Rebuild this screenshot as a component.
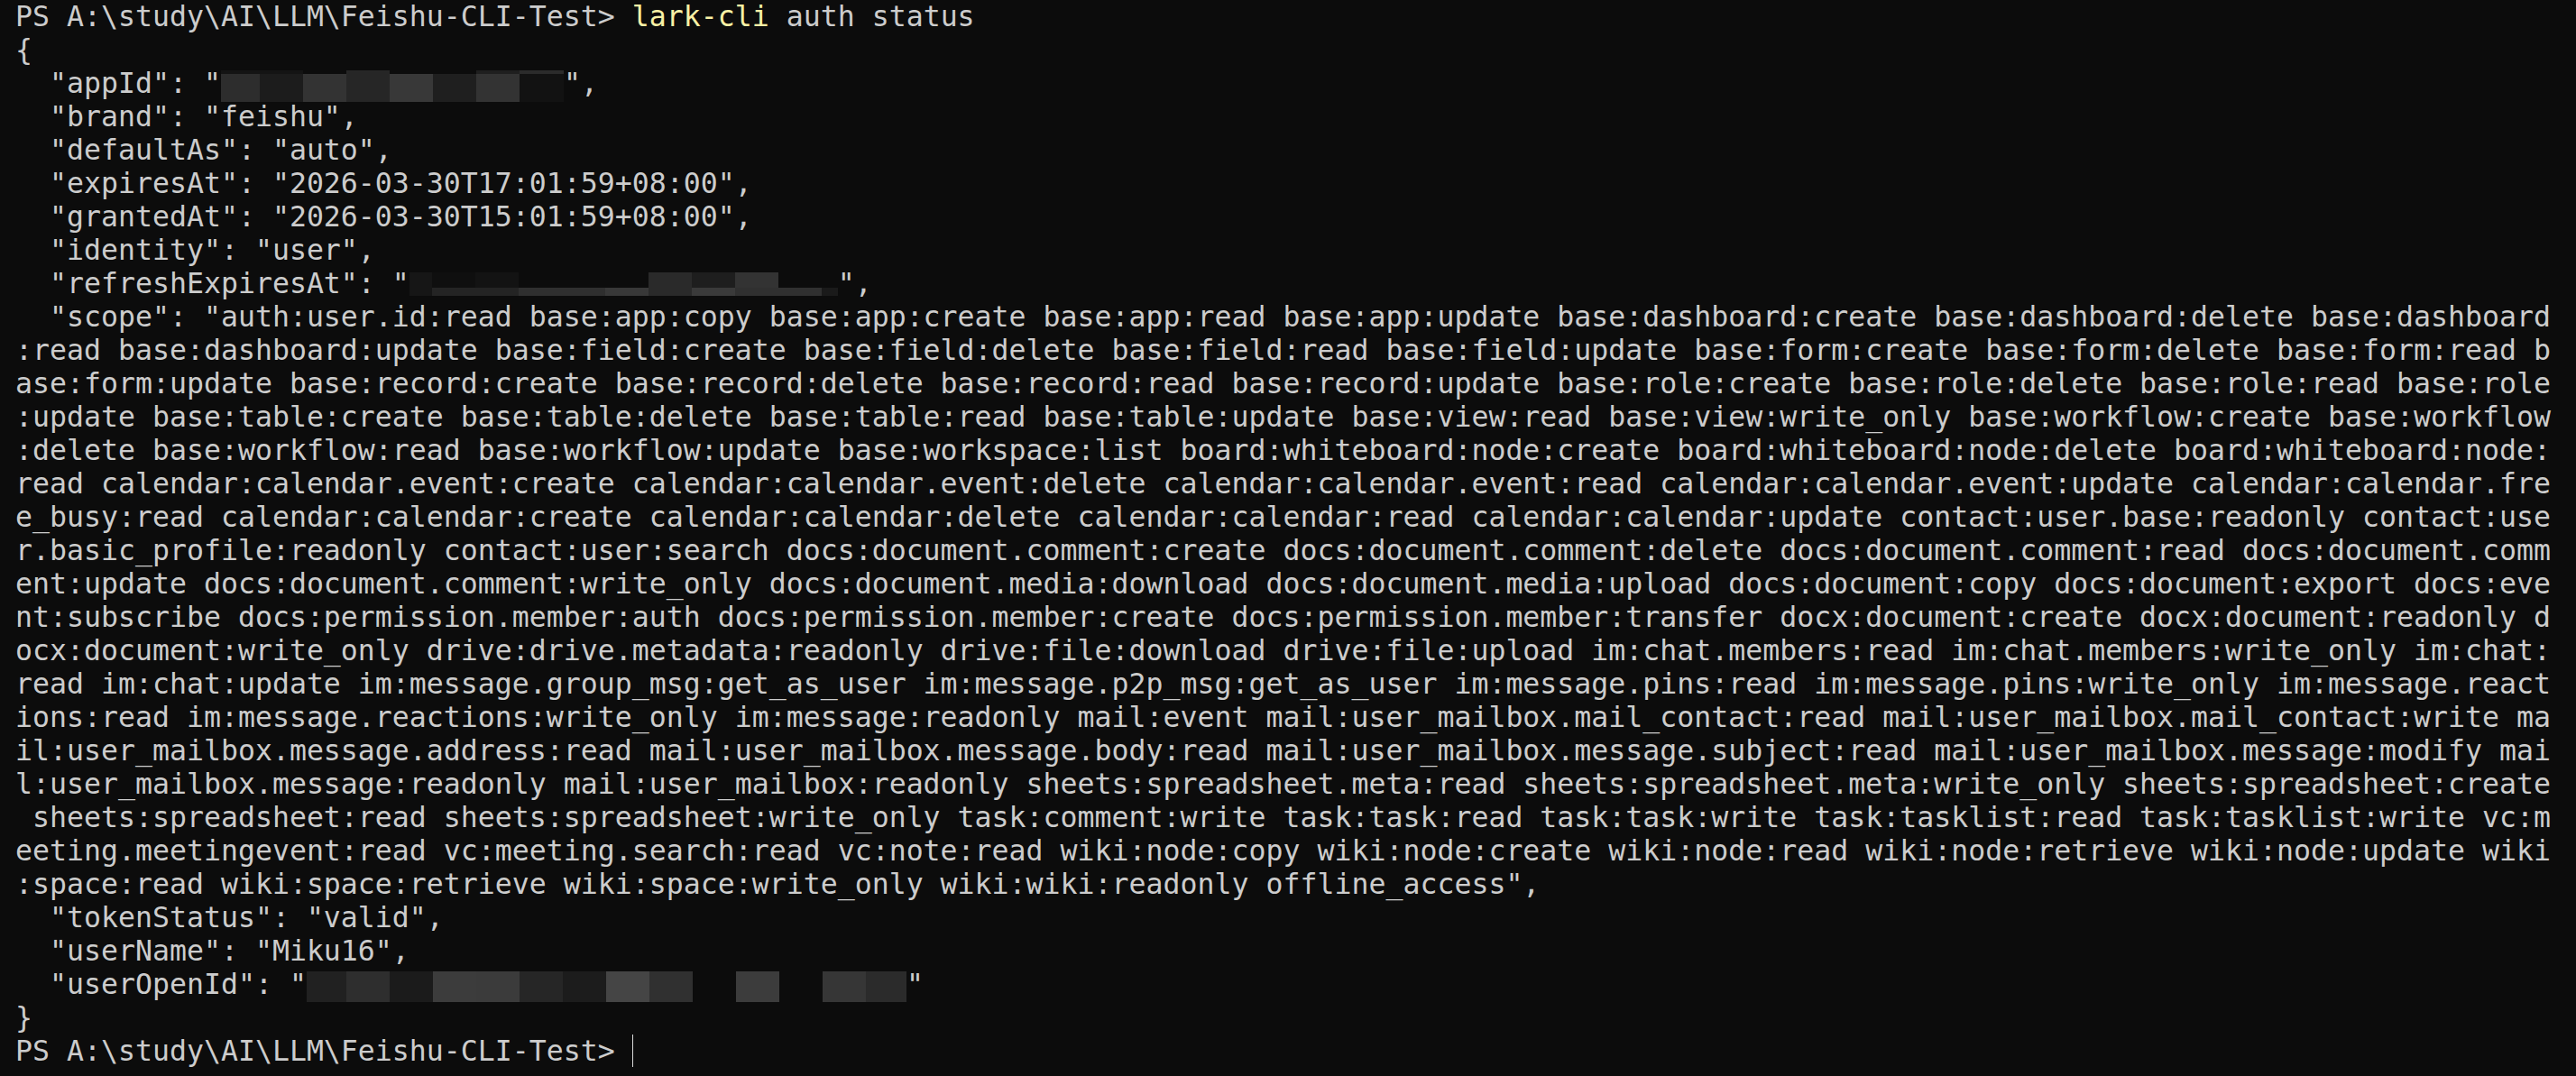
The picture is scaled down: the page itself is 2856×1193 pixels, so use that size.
import React from "react";

type R = [number, number, number, number, string];

function Mosaic({ width, rects }: { width: number; rects: R[] }) {
  return (
    <svg
      width={width}
      height={37}
      viewBox={`0 0 ${width} 37`}
      className="inline-block align-top overflow-visible"
    >
      {rects.map(([x, y, w, h, c], i) => (
        <rect key={i} x={x} y={y} width={w} height={h} fill={c} />
      ))}
    </svg>
  );
}

// appId mosaic: origin x=245, 20 chars
const appIdRects: R[] = [
  [0, 4, 91, 4, "#141414"],
  [139, 4, 48, 4, "#262626"],
  [283, 4, 48, 4, "#1f1f1f"],
  [331, 4, 49, 4, "#2b2b2b"],
  [0, 8, 43, 31, "#2d2d2d"],
  [43, 8, 48, 31, "#1c1c1c"],
  [91, 8, 48, 31, "#333333"],
  [139, 8, 48, 31, "#262626"],
  [187, 8, 48, 31, "#383838"],
  [235, 8, 48, 31, "#1f1f1f"],
  [283, 8, 48, 31, "#333333"],
  [331, 8, 49, 31, "#121212"],
];

// refreshExpiresAt mosaic: origin x=455, 25 chars
const refreshRects: R[] = [
  [0, 6, 25, 26, "#161616"],
  [25, 6, 48, 17, "#0f0f0f"],
  [73, 6, 48, 17, "#131313"],
  [265, 6, 48, 17, "#2a2a2a"],
  [313, 6, 48, 17, "#1e1e1e"],
  [361, 6, 48, 17, "#333333"],
  [25, 23, 96, 9, "#242424"],
  [121, 23, 96, 9, "#2f2f2f"],
  [217, 23, 48, 9, "#383838"],
  [265, 23, 48, 9, "#2a2a2a"],
  [313, 23, 48, 9, "#3a3a3a"],
  [361, 23, 96, 9, "#303030"],
  [457, 23, 18, 9, "#1a1a1a"],
];

// userOpenId mosaic: origin x=340, 35 chars
const openIdColors = [
  "#212121",
  "#2e2e2e",
  "#1b1b1b",
  "#3c3c3c",
  "#3b3b3b",
  "#262626",
  "#1c1c1c",
  "#454545",
  "#303030",
  "#0c0c0c",
  "#3c3c3c",
  "#0c0c0c",
  "#363636",
  "#2b2b2b",
];
const openIdRects: R[] = openIdColors.map((c, i) => {
  const x = i === 0 ? 0 : 44 + (i - 1) * 48;
  const w = i === 0 ? 44 : i === openIdColors.length - 1 ? 665 - x : 48;
  return [x, 4, w, 34, c] as R;
});

const scopeLines = [
  '  "scope": "auth:user.id:read base:app:copy base:app:create base:app:read base:app:update base:dashboard:create base:dashboard:delete base:dashboard',
  ":read base:dashboard:update base:field:create base:field:delete base:field:read base:field:update base:form:create base:form:delete base:form:read b",
  "ase:form:update base:record:create base:record:delete base:record:read base:record:update base:role:create base:role:delete base:role:read base:role",
  ":update base:table:create base:table:delete base:table:read base:table:update base:view:read base:view:write_only base:workflow:create base:workflow",
  ":delete base:workflow:read base:workflow:update base:workspace:list board:whiteboard:node:create board:whiteboard:node:delete board:whiteboard:node:",
  "read calendar:calendar.event:create calendar:calendar.event:delete calendar:calendar.event:read calendar:calendar.event:update calendar:calendar.fre",
  "e_busy:read calendar:calendar:create calendar:calendar:delete calendar:calendar:read calendar:calendar:update contact:user.base:readonly contact:use",
  "r.basic_profile:readonly contact:user:search docs:document.comment:create docs:document.comment:delete docs:document.comment:read docs:document.comm",
  "ent:update docs:document.comment:write_only docs:document.media:download docs:document.media:upload docs:document:copy docs:document:export docs:eve",
  "nt:subscribe docs:permission.member:auth docs:permission.member:create docs:permission.member:transfer docx:document:create docx:document:readonly d",
  "ocx:document:write_only drive:drive.metadata:readonly drive:file:download drive:file:upload im:chat.members:read im:chat.members:write_only im:chat:",
  "read im:chat:update im:message.group_msg:get_as_user im:message.p2p_msg:get_as_user im:message.pins:read im:message.pins:write_only im:message.react",
  "ions:read im:message.reactions:write_only im:message:readonly mail:event mail:user_mailbox.mail_contact:read mail:user_mailbox.mail_contact:write ma",
  "il:user_mailbox.message.address:read mail:user_mailbox.message.body:read mail:user_mailbox.message.subject:read mail:user_mailbox.message:modify mai",
  "l:user_mailbox.message:readonly mail:user_mailbox:readonly sheets:spreadsheet.meta:read sheets:spreadsheet.meta:write_only sheets:spreadsheet:create",
  " sheets:spreadsheet:read sheets:spreadsheet:write_only task:comment:write task:task:read task:task:write task:tasklist:read task:tasklist:write vc:m",
  "eeting.meetingevent:read vc:meeting.search:read vc:note:read wiki:node:copy wiki:node:create wiki:node:read wiki:node:retrieve wiki:node:update wiki",
  ':space:read wiki:space:retrieve wiki:space:write_only wiki:wiki:readonly offline_access",',
];

function Line({ children }: { children?: React.ReactNode }) {
  return <div className="h-[37px] whitespace-pre">{children}</div>;
}

const PROMPT = "PS A:\\study\\AI\\LLM\\Feishu-CLI-Test> ";

export default function App() {
  return (
    <div className="h-screen w-full overflow-hidden bg-[#0c0c0c] pl-[17px] font-['DejaVu_Sans_Mono',monospace] text-[31.56px] leading-[37px] text-[#cccccc]">
      <Line>
        {PROMPT}
        <span className="text-[#f9f1a5]">lark-cli</span>
        {" auth status"}
      </Line>
      <Line>{"{"}</Line>
      <Line>
        {'  "appId": "'}
        <Mosaic width={380} rects={appIdRects} />
        {'",'}
      </Line>
      <Line>{'  "brand": "feishu",'}</Line>
      <Line>{'  "defaultAs": "auto",'}</Line>
      <Line>{'  "expiresAt": "2026-03-30T17:01:59+08:00",'}</Line>
      <Line>{'  "grantedAt": "2026-03-30T15:01:59+08:00",'}</Line>
      <Line>{'  "identity": "user",'}</Line>
      <Line>
        {'  "refreshExpiresAt": "'}
        <Mosaic width={475} rects={refreshRects} />
        {'",'}
      </Line>
      {scopeLines.map((s, i) => (
        <Line key={i}>{s}</Line>
      ))}
      <Line>{'  "tokenStatus": "valid",'}</Line>
      <Line>{'  "userName": "Miku16",'}</Line>
      <Line>
        {'  "userOpenId": "'}
        <Mosaic width={665} rects={openIdRects} />
        {'"'}
      </Line>
      <Line>{"}"}</Line>
      <Line>
        {PROMPT}
        <span className="inline-block h-[36px] w-[1px] bg-[#d9d9d9] align-top" />
      </Line>
    </div>
  );
}
